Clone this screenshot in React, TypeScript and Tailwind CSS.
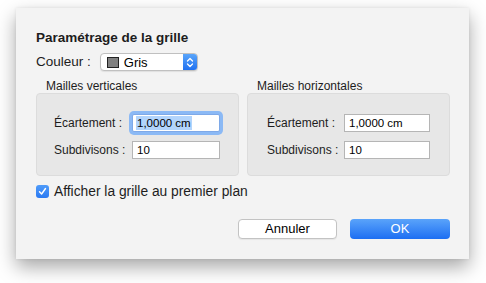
import React from "react";

const font = { fontFamily: "'Liberation Sans', Arial, sans-serif" };

function Field({ label, value, focused, pad, labelW, inputW }: { label: string; value: string; focused?: boolean; pad: string; labelW: string; inputW: string }) {
  return (
    <div className={`flex items-center ${pad}`}>
      <div className={`${labelW} text-[12px] leading-[14px] text-[#1d1d1d]`}>{label}</div>
      {focused ? (
        <div className={`${inputW} h-[18px] rounded-[2px] ring-[3px] ring-[#8bb9f5] bg-white border border-[#7ea9e8] flex items-center pl-[3px]`}>
          <span className="bg-[#b2d4fc] text-[11.5px] leading-[14px] text-black px-[1px]">{value}</span>
        </div>
      ) : (
        <div className={`${inputW} h-[18px] bg-white border border-[#b5b5b5] flex items-center pl-[4px] text-[11.5px] leading-[14px] text-black`}>{value}</div>
      )}
    </div>
  );
}

export default function App() {
  return (
    <div className="w-[486px] h-[283px] bg-white pt-[8px] pl-[16px]" style={font}>
      <div className="w-[453px] h-[251px] bg-[#f3f3f3] shadow-[0_8px_18px_rgba(0,0,0,0.35),0_0_3px_rgba(0,0,0,0.08)] pl-[20px] pr-[19px] pt-[22px] flex flex-col">
        <div className="text-[13.5px] font-bold leading-[16px] text-[#1d1d1d]">Paramétrage de la grille</div>
        <div className="flex items-center mt-[7px] h-[18px]">
          <span className="text-[13.5px] leading-[16px] text-[#1d1d1d]">Couleur :</span>
          <div className="ml-[9px] w-[98px] h-[18px] rounded-[4px] bg-white border border-[#c0c0c0] flex items-center overflow-hidden shadow-[0_1px_1px_rgba(0,0,0,0.08)]">
            <div className="ml-[6px] w-[12px] h-[11px] bg-[#808080] border border-[#222]" />
            <span className="ml-[5px] text-[13px] leading-[15px] text-black">Gris</span>
            <div className="ml-auto w-[14px] h-full bg-gradient-to-b from-[#5aa5fa] to-[#1f70f0] flex items-center justify-center">
              <svg width="8" height="11" viewBox="0 0 8 11" fill="none" stroke="white" strokeWidth="1.3" strokeLinecap="round" strokeLinejoin="round">
                <path d="M1.5 4 L4 1.5 L6.5 4" />
                <path d="M1.5 7 L4 9.5 L6.5 7" />
              </svg>
            </div>
          </div>
        </div>
        <div className="flex gap-[8px] mt-[9px]">
          <div className="w-[203px] flex flex-col">
            <div className="pl-[10px] text-[12px] leading-[13px] text-[#1d1d1d]">Mailles verticales</div>
            <div className="h-[83px] rounded-[4px] bg-[#e7e7e7] border border-[#dcdcdc] pt-[20px] flex flex-col gap-[9px]">
              <Field label="Écartement :" value="1,0000 cm" focused pad="pl-[17px]" labelW="w-[78px]" inputW="w-[88px]" />
              <Field label="Subdivisons :" value="10" pad="pl-[17px]" labelW="w-[78px]" inputW="w-[88px]" />
            </div>
          </div>
          <div className="w-[203px] flex flex-col">
            <div className="pl-[10px] text-[12px] leading-[13px] text-[#1d1d1d]">Mailles horizontales</div>
            <div className="h-[83px] rounded-[4px] bg-[#e7e7e7] border border-[#dcdcdc] pt-[20px] flex flex-col gap-[9px]">
              <Field label="Écartement :" value="1,0000 cm" pad="pl-[19px]" labelW="w-[77px]" inputW="w-[86px]" />
              <Field label="Subdivisons :" value="10" pad="pl-[19px]" labelW="w-[77px]" inputW="w-[86px]" />
            </div>
          </div>
        </div>
        <div className="flex items-center mt-[7px]">
          <div className="w-[13px] h-[13px] rounded-[3px] bg-gradient-to-b from-[#4f9bf9] to-[#2a79f2] flex items-center justify-center">
            <svg width="9" height="9" viewBox="0 0 9 9" fill="none" stroke="white" strokeWidth="1.4" strokeLinecap="round" strokeLinejoin="round">
              <path d="M1.5 4.8 L3.6 7 L7.5 1.5" />
            </svg>
          </div>
          <span className="ml-[5px] text-[13.8px] leading-[17px] text-[#1d1d1d]">Afficher la grille au premier plan</span>
        </div>
        <div className="flex justify-end gap-[13px] mt-[19px]">
          <div className="w-[99px] h-[20px] rounded-[4px] bg-white border border-[#c3c3c3] flex items-center justify-center text-[13px] text-black shadow-[0_1px_1px_rgba(0,0,0,0.06)]">Annuler</div>
          <div className="w-[100px] h-[20px] rounded-[4px] bg-gradient-to-b from-[#5aa3fa] to-[#1c6ef2] flex items-center justify-center text-[13px] text-white">OK</div>
        </div>
      </div>
    </div>
  );
}
